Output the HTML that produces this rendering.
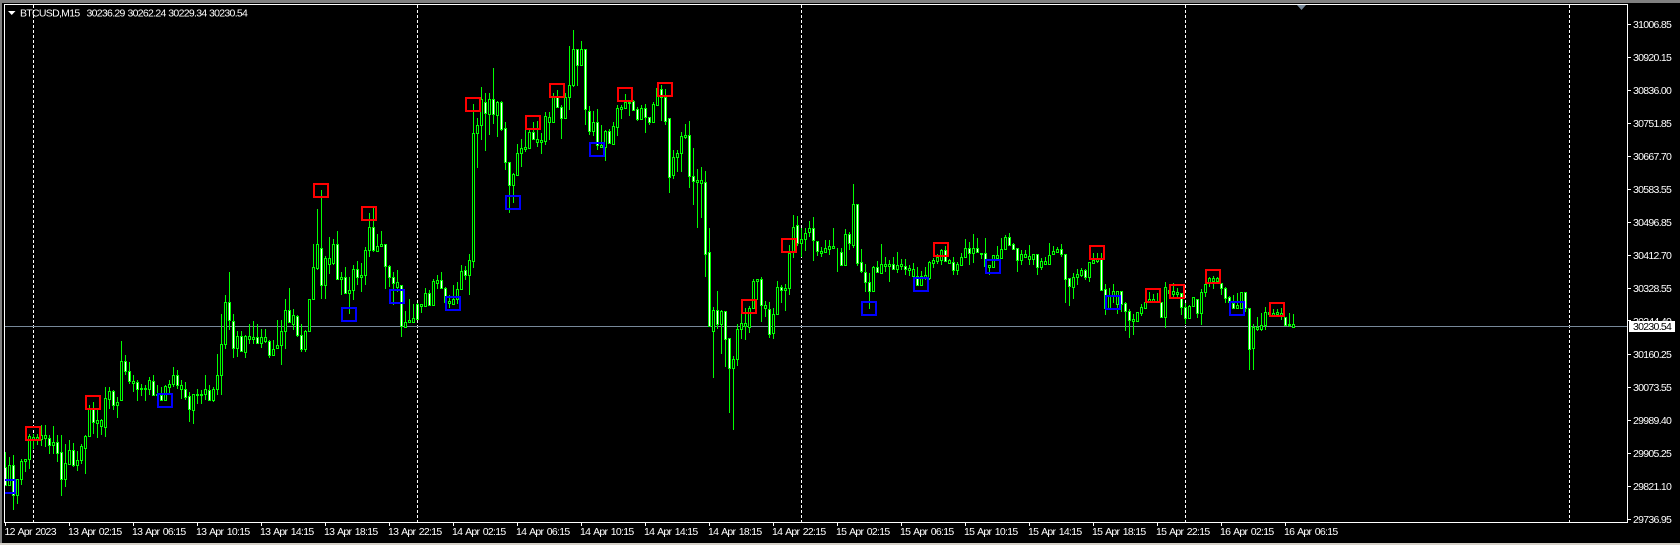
<!DOCTYPE html>
<html lang="en">
<head>
<meta charset="utf-8">
<title>BTCUSD,M15</title>
<style>
html,body{margin:0;padding:0;background:#000;width:1680px;height:545px;overflow:hidden}
svg{display:block}
text{font-family:"Liberation Sans",sans-serif;font-size:10.5px;letter-spacing:-.7px;fill:#fff;dominant-baseline:auto}
.t{word-spacing:1.2px}
</style>
</head>
<body>
<svg width="1680" height="545" viewBox="0 0 1680 545" xmlns="http://www.w3.org/2000/svg">
<rect width="1680" height="545" fill="#000"/>
<rect width="1680" height="3" fill="#808080"/>
<rect width="2" height="545" fill="#808080"/>
<rect y="543" width="1680" height="2" fill="#d4d0c8"/>
<g shape-rendering="crispEdges">
<path d="M33.5 5V522M417.5 5V522M801.5 5V522M1185.5 5V522M1569.5 5V522" stroke="#fff" stroke-width="1" stroke-dasharray="3 2" fill="none"/>
<path d="M5 326.5H1627" stroke="#778899" stroke-width="1"/>
<path fill="none" stroke="#00ff00" stroke-width="1" d="M5.5 452V485M9.5 457V485M13.5 455V510M17.5 479V504M21.5 459V485M25.5 459V472M29.5 434V469M33.5 434V449M37.5 434V445M41.5 425V446M45.5 425V447M49.5 435V454M53.5 426V454M57.5 435V462M61.5 435V496M65.5 444V487M69.5 440V465M73.5 443V467M77.5 451V471M81.5 444V464M85.5 435V474M89.5 405V437M93.5 402V434M97.5 410V438M101.5 419V435M105.5 387V437M109.5 387V409M113.5 390V410M117.5 397V418M121.5 341V400M125.5 355V375M129.5 362V384M133.5 375V392M137.5 380V401M141.5 384V396M145.5 385V401M149.5 377V395M153.5 375V395M157.5 385V404M161.5 387V401M165.5 385V401M169.5 380V395M173.5 367V387M177.5 370V389M181.5 380V399M185.5 382V400M189.5 392V422M193.5 394V424M197.5 389V404M201.5 390V404M205.5 375V400M209.5 385V400M213.5 387V402M217.5 354V395M221.5 314V395M225.5 295V349M229.5 272V330M233.5 314V358M237.5 331V357M241.5 331V352M245.5 335V358M249.5 324V344M253.5 321V344M257.5 324V344M261.5 329V348M265.5 329V343M269.5 340V358M273.5 340V355M277.5 320V348M281.5 320V365M285.5 299V349M289.5 288V322M293.5 309V330M297.5 315V337M301.5 324V352M305.5 330V352M309.5 299V332M313.5 244V300M317.5 209V270M321.5 190V299M325.5 256V299M329.5 237V274M333.5 239V265M337.5 231V279M341.5 272V295M345.5 267V294M349.5 277V314M353.5 265V300M357.5 261V285M361.5 263V292M365.5 247V285M369.5 213V257M373.5 208V252M377.5 234V252M381.5 231V246M385.5 244V289M389.5 265V287M393.5 272V305M397.5 270V292M401.5 285V337M405.5 311V327M409.5 299V322M413.5 304V322M417.5 303V320M421.5 304V313M425.5 288V307M429.5 290V306M433.5 279V306M437.5 275V289M441.5 272V289M445.5 287V305M449.5 295V308M453.5 285V305M457.5 282V304M461.5 265V290M465.5 266V280M469.5 254V295M473.5 104V268M477.5 118V168M481.5 87V140M485.5 93V151M489.5 93V135M493.5 68V124M497.5 101V137M501.5 101V131M505.5 122V170M509.5 162V213M513.5 173V203M517.5 144V175M521.5 139V167M525.5 130V152M529.5 130V148M533.5 122V140M537.5 121V147M541.5 133V154M545.5 112V145M549.5 112V140M553.5 93V122M557.5 90V108M561.5 105V139M565.5 93V119M569.5 46V110M573.5 30V87M577.5 49V86M581.5 41V65M585.5 49V125M589.5 106V135M593.5 111V136M597.5 109V150M601.5 125V147M605.5 130V161M609.5 129V144M613.5 122V144M617.5 105V136M621.5 105V119M625.5 94V108M629.5 102V116M633.5 100V110M637.5 107V121M641.5 105V120M645.5 104V133M649.5 117V125M653.5 102V122M657.5 87V105M661.5 85V121M665.5 89V125M669.5 118V193M673.5 150V179M677.5 150V172M681.5 132V172M685.5 124V139M689.5 121V188M693.5 148V205M697.5 169V228M701.5 167V218M705.5 171V277M709.5 228V325M713.5 307V378M717.5 291V329M721.5 310V354M725.5 311V367M729.5 338V413M733.5 356V430M737.5 324V366M741.5 314V339M745.5 308V340M749.5 306V333M753.5 279V309M757.5 279V300M761.5 277V322M765.5 301V317M769.5 302V338M773.5 308V339M777.5 281V315M781.5 285V303M785.5 284V311M789.5 245V295M793.5 215V258M797.5 216V246M801.5 228V257M805.5 228V251M809.5 221V237M813.5 217V261M817.5 241V256M821.5 247V257M825.5 240V253M829.5 240V255M833.5 228V248M837.5 248V272M841.5 248V266M845.5 229V266M849.5 232V250M853.5 184V248M857.5 204V266M861.5 249V273M865.5 264V292M869.5 273V309M873.5 266V291M877.5 261V273M881.5 244V274M885.5 257V272M889.5 260V282M893.5 257V269M897.5 252V273M901.5 259V270M905.5 259V275M909.5 265V276M913.5 263V286M917.5 267V285M921.5 271V285M925.5 267V280M929.5 261V280M933.5 258V268M937.5 254V264M941.5 249V265M945.5 246V261M949.5 259V263M953.5 257V275M957.5 262V275M961.5 253V265M965.5 239V258M969.5 242V265M973.5 234V263M977.5 238V253M981.5 253V259M985.5 238V266M989.5 265V275M993.5 255V267M997.5 246V258M1001.5 238V258M1005.5 235V250M1009.5 233V246M1013.5 243V249M1017.5 248V272M1021.5 250V265M1025.5 250V258M1029.5 245V265M1033.5 254V265M1037.5 254V275M1041.5 258V270M1045.5 257V264M1049.5 243V264M1053.5 246V255M1057.5 247V253M1061.5 244V257M1065.5 254V303M1069.5 278V306M1073.5 273V299M1077.5 269V285M1081.5 268V277M1085.5 269V280M1089.5 262V282M1093.5 253V263M1097.5 253V263M1101.5 253V290M1105.5 284V315M1109.5 288V309M1113.5 284V303M1117.5 291V314M1121.5 291V312M1125.5 302V331M1129.5 309V338M1133.5 314V335M1137.5 312V322M1141.5 304V316M1145.5 302V308M1149.5 292V302M1153.5 294V302M1157.5 293V303M1161.5 302V317M1165.5 282V328M1169.5 285V295M1173.5 283V298M1177.5 288V298M1181.5 293V315M1185.5 303V324M1189.5 305V318M1193.5 297V307M1197.5 299V318M1201.5 289V325M1205.5 284V297M1209.5 277V287M1213.5 276V289M1217.5 277V283M1221.5 283V295M1225.5 287V303M1229.5 296V312M1233.5 295V308M1237.5 293V308M1241.5 292V308M1245.5 292V312M1249.5 308V370M1253.5 324V370M1257.5 317V331M1261.5 313V331M1265.5 307V330M1269.5 310V316M1273.5 309V315M1277.5 309V315M1281.5 308V320M1285.5 317V325M1289.5 313V327M1293.5 314V328"/>
<path fill="#000" stroke="#00ff00" stroke-width="1" d="M8.5 465.5h2V485.5h-2zM16.5 479.5h2V495.5h-2zM20.5 461.5h2V479.5h-2zM24.5 459.5h2V461.5h-2zM28.5 436.5h2V459.5h-2zM32.5 437.5h2V439.5h-2zM36.5 437.5h2V439.5h-2zM40.5 435.5h2V439.5h-2zM44.5 435.5h2V438.5h-2zM52.5 442.5h2V445.5h-2zM64.5 463.5h2V479.5h-2zM68.5 450.5h2V464.5h-2zM76.5 460.5h2V465.5h-2zM80.5 446.5h2V460.5h-2zM84.5 436.5h2V448.5h-2zM88.5 409.5h2V436.5h-2zM96.5 420.5h2V423.5h-2zM100.5 420.5h2V426.5h-2zM104.5 398.5h2V427.5h-2zM108.5 391.5h2V399.5h-2zM116.5 402.5h2V405.5h-2zM120.5 361.5h2V400.5h-2zM132.5 381.5h2V383.5h-2zM140.5 388.5h2V389.5h-2zM144.5 388.5h2V389.5h-2zM148.5 380.5h2V389.5h-2zM156.5 394.5h2V395.5h-2zM164.5 386.5h2V400.5h-2zM168.5 384.5h2V387.5h-2zM172.5 375.5h2V384.5h-2zM180.5 385.5h2V389.5h-2zM192.5 394.5h2V410.5h-2zM196.5 394.5h2V395.5h-2zM200.5 394.5h2V395.5h-2zM204.5 389.5h2V394.5h-2zM212.5 389.5h2V400.5h-2zM216.5 375.5h2V389.5h-2zM220.5 344.5h2V375.5h-2zM224.5 302.5h2V344.5h-2zM236.5 336.5h2V348.5h-2zM244.5 336.5h2V352.5h-2zM248.5 336.5h2V339.5h-2zM252.5 337.5h2V339.5h-2zM260.5 337.5h2V343.5h-2zM264.5 337.5h2V341.5h-2zM272.5 349.5h2V355.5h-2zM276.5 345.5h2V348.5h-2zM280.5 331.5h2V345.5h-2zM284.5 310.5h2V331.5h-2zM292.5 315.5h2V324.5h-2zM304.5 331.5h2V349.5h-2zM308.5 299.5h2V331.5h-2zM312.5 267.5h2V299.5h-2zM316.5 244.5h2V268.5h-2zM324.5 258.5h2V285.5h-2zM328.5 258.5h2V264.5h-2zM332.5 244.5h2V263.5h-2zM340.5 277.5h2V279.5h-2zM348.5 290.5h2V293.5h-2zM352.5 269.5h2V290.5h-2zM360.5 275.5h2V277.5h-2zM364.5 250.5h2V275.5h-2zM368.5 227.5h2V250.5h-2zM376.5 246.5h2V251.5h-2zM380.5 244.5h2V246.5h-2zM396.5 282.5h2V287.5h-2zM404.5 322.5h2V327.5h-2zM408.5 320.5h2V322.5h-2zM412.5 318.5h2V322.5h-2zM420.5 304.5h2V306.5h-2zM424.5 293.5h2V306.5h-2zM432.5 281.5h2V305.5h-2zM436.5 280.5h2V283.5h-2zM448.5 301.5h2V303.5h-2zM452.5 299.5h2V304.5h-2zM456.5 289.5h2V299.5h-2zM460.5 271.5h2V289.5h-2zM468.5 260.5h2V275.5h-2zM472.5 133.5h2V261.5h-2zM476.5 125.5h2V133.5h-2zM480.5 99.5h2V125.5h-2zM488.5 99.5h2V114.5h-2zM496.5 102.5h2V115.5h-2zM512.5 174.5h2V185.5h-2zM516.5 153.5h2V175.5h-2zM520.5 148.5h2V153.5h-2zM524.5 147.5h2V149.5h-2zM528.5 132.5h2V148.5h-2zM536.5 139.5h2V142.5h-2zM540.5 140.5h2V142.5h-2zM544.5 116.5h2V141.5h-2zM548.5 117.5h2V122.5h-2zM552.5 97.5h2V122.5h-2zM564.5 97.5h2V118.5h-2zM568.5 85.5h2V97.5h-2zM572.5 49.5h2V85.5h-2zM580.5 49.5h2V65.5h-2zM592.5 122.5h2V131.5h-2zM600.5 145.5h2V147.5h-2zM604.5 131.5h2V147.5h-2zM612.5 126.5h2V144.5h-2zM616.5 108.5h2V127.5h-2zM620.5 107.5h2V109.5h-2zM624.5 102.5h2V108.5h-2zM628.5 102.5h2V103.5h-2zM640.5 108.5h2V119.5h-2zM652.5 104.5h2V122.5h-2zM656.5 88.5h2V105.5h-2zM672.5 157.5h2V175.5h-2zM676.5 153.5h2V157.5h-2zM680.5 136.5h2V153.5h-2zM684.5 135.5h2V137.5h-2zM696.5 180.5h2V182.5h-2zM700.5 180.5h2V183.5h-2zM712.5 310.5h2V331.5h-2zM720.5 311.5h2V324.5h-2zM732.5 359.5h2V368.5h-2zM736.5 329.5h2V359.5h-2zM740.5 323.5h2V329.5h-2zM744.5 323.5h2V326.5h-2zM748.5 308.5h2V327.5h-2zM752.5 281.5h2V308.5h-2zM756.5 279.5h2V281.5h-2zM764.5 305.5h2V308.5h-2zM772.5 314.5h2V333.5h-2zM776.5 287.5h2V314.5h-2zM784.5 288.5h2V290.5h-2zM788.5 253.5h2V288.5h-2zM792.5 227.5h2V252.5h-2zM800.5 239.5h2V243.5h-2zM804.5 233.5h2V239.5h-2zM808.5 228.5h2V232.5h-2zM820.5 251.5h2V253.5h-2zM824.5 248.5h2V252.5h-2zM828.5 246.5h2V249.5h-2zM832.5 246.5h2V248.5h-2zM844.5 234.5h2V265.5h-2zM852.5 204.5h2V245.5h-2zM872.5 267.5h2V291.5h-2zM880.5 264.5h2V273.5h-2zM884.5 264.5h2V266.5h-2zM888.5 264.5h2V266.5h-2zM896.5 265.5h2V269.5h-2zM900.5 264.5h2V266.5h-2zM908.5 268.5h2V270.5h-2zM912.5 269.5h2V276.5h-2zM920.5 276.5h2V285.5h-2zM924.5 275.5h2V278.5h-2zM928.5 262.5h2V278.5h-2zM932.5 260.5h2V263.5h-2zM936.5 257.5h2V261.5h-2zM940.5 250.5h2V260.5h-2zM948.5 260.5h2V263.5h-2zM956.5 264.5h2V270.5h-2zM960.5 257.5h2V265.5h-2zM964.5 248.5h2V257.5h-2zM972.5 248.5h2V253.5h-2zM980.5 253.5h2V254.5h-2zM988.5 265.5h2V267.5h-2zM992.5 255.5h2V267.5h-2zM996.5 255.5h2V258.5h-2zM1000.5 249.5h2V258.5h-2zM1004.5 237.5h2V249.5h-2zM1020.5 254.5h2V260.5h-2zM1024.5 254.5h2V257.5h-2zM1028.5 256.5h2V259.5h-2zM1032.5 254.5h2V259.5h-2zM1040.5 261.5h2V267.5h-2zM1044.5 261.5h2V264.5h-2zM1048.5 255.5h2V264.5h-2zM1052.5 251.5h2V254.5h-2zM1056.5 249.5h2V252.5h-2zM1072.5 277.5h2V287.5h-2zM1076.5 274.5h2V277.5h-2zM1080.5 270.5h2V275.5h-2zM1088.5 262.5h2V277.5h-2zM1092.5 260.5h2V263.5h-2zM1096.5 259.5h2V261.5h-2zM1108.5 296.5h2V308.5h-2zM1112.5 291.5h2V296.5h-2zM1116.5 291.5h2V304.5h-2zM1132.5 319.5h2V321.5h-2zM1136.5 312.5h2V321.5h-2zM1140.5 307.5h2V313.5h-2zM1144.5 302.5h2V308.5h-2zM1148.5 299.5h2V302.5h-2zM1152.5 299.5h2V302.5h-2zM1164.5 287.5h2V317.5h-2zM1168.5 290.5h2V293.5h-2zM1172.5 291.5h2V294.5h-2zM1176.5 292.5h2V294.5h-2zM1188.5 306.5h2V318.5h-2zM1192.5 297.5h2V306.5h-2zM1200.5 292.5h2V313.5h-2zM1204.5 284.5h2V292.5h-2zM1208.5 278.5h2V283.5h-2zM1212.5 278.5h2V281.5h-2zM1216.5 278.5h2V281.5h-2zM1236.5 305.5h2V308.5h-2zM1240.5 292.5h2V308.5h-2zM1252.5 327.5h2V348.5h-2zM1256.5 327.5h2V329.5h-2zM1260.5 325.5h2V329.5h-2zM1264.5 312.5h2V325.5h-2zM1268.5 312.5h2V314.5h-2zM1272.5 313.5h2V315.5h-2zM1276.5 312.5h2V314.5h-2zM1280.5 313.5h2V315.5h-2zM1288.5 324.5h2V325.5h-2zM1292.5 324.5h2V327.5h-2z"/>
<path fill="#fff" stroke="#00ff00" stroke-width="1" d="M4.5 467.5h2V485.5h-2zM12.5 465.5h2V495.5h-2zM48.5 438.5h2V445.5h-2zM56.5 442.5h2V453.5h-2zM60.5 452.5h2V479.5h-2zM72.5 450.5h2V465.5h-2zM92.5 409.5h2V422.5h-2zM112.5 391.5h2V405.5h-2zM124.5 361.5h2V371.5h-2zM128.5 371.5h2V381.5h-2zM136.5 382.5h2V389.5h-2zM152.5 381.5h2V395.5h-2zM160.5 395.5h2V400.5h-2zM176.5 375.5h2V385.5h-2zM184.5 389.5h2V397.5h-2zM188.5 396.5h2V409.5h-2zM208.5 390.5h2V400.5h-2zM228.5 302.5h2V320.5h-2zM232.5 321.5h2V348.5h-2zM240.5 336.5h2V351.5h-2zM256.5 337.5h2V343.5h-2zM268.5 341.5h2V355.5h-2zM288.5 310.5h2V322.5h-2zM296.5 316.5h2V335.5h-2zM300.5 335.5h2V349.5h-2zM320.5 248.5h2V285.5h-2zM336.5 244.5h2V279.5h-2zM344.5 277.5h2V293.5h-2zM356.5 269.5h2V277.5h-2zM372.5 227.5h2V250.5h-2zM384.5 244.5h2V266.5h-2zM388.5 266.5h2V277.5h-2zM392.5 277.5h2V283.5h-2zM400.5 285.5h2V326.5h-2zM416.5 304.5h2V319.5h-2zM428.5 293.5h2V305.5h-2zM440.5 280.5h2V288.5h-2zM444.5 288.5h2V302.5h-2zM464.5 270.5h2V275.5h-2zM484.5 102.5h2V113.5h-2zM492.5 99.5h2V114.5h-2zM500.5 102.5h2V129.5h-2zM504.5 128.5h2V162.5h-2zM508.5 162.5h2V185.5h-2zM532.5 132.5h2V139.5h-2zM556.5 97.5h2V107.5h-2zM560.5 107.5h2V118.5h-2zM576.5 49.5h2V65.5h-2zM584.5 49.5h2V109.5h-2zM588.5 111.5h2V131.5h-2zM596.5 122.5h2V145.5h-2zM608.5 131.5h2V143.5h-2zM632.5 101.5h2V110.5h-2zM636.5 109.5h2V119.5h-2zM644.5 108.5h2V117.5h-2zM648.5 117.5h2V122.5h-2zM660.5 89.5h2V97.5h-2zM664.5 97.5h2V121.5h-2zM668.5 118.5h2V177.5h-2zM688.5 135.5h2V176.5h-2zM692.5 176.5h2V181.5h-2zM704.5 182.5h2V254.5h-2zM708.5 252.5h2V326.5h-2zM716.5 310.5h2V324.5h-2zM724.5 311.5h2V339.5h-2zM728.5 338.5h2V368.5h-2zM760.5 279.5h2V305.5h-2zM768.5 309.5h2V334.5h-2zM780.5 287.5h2V290.5h-2zM796.5 225.5h2V243.5h-2zM812.5 228.5h2V240.5h-2zM816.5 241.5h2V251.5h-2zM840.5 252.5h2V265.5h-2zM848.5 234.5h2V243.5h-2zM856.5 204.5h2V263.5h-2zM860.5 262.5h2V271.5h-2zM864.5 272.5h2V282.5h-2zM868.5 282.5h2V291.5h-2zM876.5 267.5h2V272.5h-2zM892.5 264.5h2V269.5h-2zM904.5 266.5h2V269.5h-2zM916.5 276.5h2V285.5h-2zM944.5 250.5h2V261.5h-2zM952.5 262.5h2V270.5h-2zM968.5 248.5h2V253.5h-2zM976.5 248.5h2V252.5h-2zM984.5 253.5h2V266.5h-2zM1008.5 237.5h2V245.5h-2zM1012.5 244.5h2V249.5h-2zM1016.5 248.5h2V260.5h-2zM1036.5 254.5h2V267.5h-2zM1060.5 249.5h2V254.5h-2zM1064.5 254.5h2V279.5h-2zM1068.5 278.5h2V286.5h-2zM1084.5 270.5h2V277.5h-2zM1100.5 259.5h2V290.5h-2zM1104.5 289.5h2V308.5h-2zM1120.5 291.5h2V304.5h-2zM1124.5 303.5h2V311.5h-2zM1128.5 311.5h2V320.5h-2zM1160.5 302.5h2V317.5h-2zM1180.5 293.5h2V307.5h-2zM1184.5 307.5h2V318.5h-2zM1196.5 299.5h2V313.5h-2zM1220.5 283.5h2V288.5h-2zM1224.5 288.5h2V298.5h-2zM1228.5 297.5h2V302.5h-2zM1232.5 303.5h2V308.5h-2zM1244.5 292.5h2V308.5h-2zM1248.5 308.5h2V349.5h-2zM1284.5 317.5h2V325.5h-2z"/>
<g fill="none" stroke="#ff0000" stroke-width="2">
<rect x="26" y="427" width="14" height="13"/>
<rect x="86" y="396" width="14" height="13"/>
<rect x="314" y="184" width="14" height="13"/>
<rect x="362" y="207" width="14" height="13"/>
<rect x="466" y="98" width="14" height="13"/>
<rect x="526" y="116" width="14" height="13"/>
<rect x="550" y="84" width="14" height="13"/>
<rect x="618" y="88" width="14" height="13"/>
<rect x="658" y="83" width="14" height="13"/>
<rect x="782" y="239" width="14" height="13"/>
<rect x="742" y="300" width="14" height="13"/>
<rect x="934" y="243" width="14" height="13"/>
<rect x="1090" y="246" width="14" height="13"/>
<rect x="1146" y="289" width="14" height="13"/>
<rect x="1170" y="285" width="14" height="13"/>
<rect x="1206" y="270" width="14" height="13"/>
<rect x="1270" y="303" width="14" height="13"/>
</g>
<g fill="none" stroke="#0000ff" stroke-width="2">
<path d="M5 480H15V493H5"/>
<rect x="158" y="394" width="14" height="13"/>
<rect x="342" y="308" width="14" height="13"/>
<rect x="390" y="290" width="14" height="13"/>
<rect x="446" y="297" width="14" height="13"/>
<rect x="506" y="196" width="14" height="13"/>
<rect x="590" y="143" width="14" height="13"/>
<rect x="862" y="302" width="14" height="13"/>
<rect x="914" y="278" width="14" height="13"/>
<rect x="986" y="260" width="14" height="13"/>
<rect x="1106" y="296" width="14" height="13"/>
<rect x="1230" y="302" width="14" height="13"/>
</g>
<path d="M4.5 4.5H1627.5V522.5H4.5Z" fill="none" stroke="#fff" stroke-width="1"/>
<path d="M5.5 523V526M69.5 523V526M133.5 523V526M197.5 523V526M261.5 523V526M325.5 523V526M389.5 523V526M453.5 523V526M517.5 523V526M581.5 523V526M645.5 523V526M709.5 523V526M773.5 523V526M837.5 523V526M901.5 523V526M965.5 523V526M1029.5 523V526M1093.5 523V526M1157.5 523V526M1221.5 523V526M1285.5 523V526" stroke="#fff" stroke-width="1"/>
<path d="M1628 24.5H1631M1628 57.5H1631M1628 90.5H1631M1628 123.5H1631M1628 156.5H1631M1628 189.5H1631M1628 222.5H1631M1628 255.5H1631M1628 288.5H1631M1628 354.5H1631M1628 387.5H1631M1628 420.5H1631M1628 453.5H1631M1628 486.5H1631M1628 519.5H1631" stroke="#fff" stroke-width="1"/>
<path d="M8 11H15.5L11.75 15Z" fill="#fff" shape-rendering="auto"/>
<path d="M1297 5H1306L1301.5 10Z" fill="#778899" shape-rendering="auto"/>
</g>
<text x="20" y="16.5">BTCUSD,M15</text>
<text x="86.5" y="16.5">30236.29</text>
<text x="127.5" y="16.5">30262.24</text>
<text x="168.3" y="16.5">30229.34</text>
<text x="209" y="16.5">30230.54</text>
<text x="1633" y="28">31006.85</text>
<text x="1633" y="61">30920.15</text>
<text x="1633" y="94">30836.00</text>
<text x="1633" y="127">30751.85</text>
<text x="1633" y="160">30667.70</text>
<text x="1633" y="193">30583.55</text>
<text x="1633" y="226">30496.85</text>
<text x="1633" y="259">30412.70</text>
<text x="1633" y="292">30328.55</text>
<text x="1633" y="325">30244.40</text>
<text x="1633" y="358">30160.25</text>
<text x="1633" y="391">30073.55</text>
<text x="1633" y="424">29989.40</text>
<text x="1633" y="457">29905.25</text>
<text x="1633" y="490">29821.10</text>
<text x="1633" y="523">29736.95</text>
<rect x="1629" y="321" width="46" height="11" fill="#fff"/>
<path d="M1627 320.5H1631" stroke="#fff" shape-rendering="crispEdges"/>
<text x="1633" y="330" style="fill:#000">30230.54</text>
<g class="t">
<text class="t" x="4.5" y="535">12 Apr 2023</text>
<text class="t" x="68" y="535">13 Apr 02:15</text>
<text class="t" x="132" y="535">13 Apr 06:15</text>
<text class="t" x="196" y="535">13 Apr 10:15</text>
<text class="t" x="260" y="535">13 Apr 14:15</text>
<text class="t" x="324" y="535">13 Apr 18:15</text>
<text class="t" x="388" y="535">13 Apr 22:15</text>
<text class="t" x="452" y="535">14 Apr 02:15</text>
<text class="t" x="516" y="535">14 Apr 06:15</text>
<text class="t" x="580" y="535">14 Apr 10:15</text>
<text class="t" x="644" y="535">14 Apr 14:15</text>
<text class="t" x="708" y="535">14 Apr 18:15</text>
<text class="t" x="772" y="535">14 Apr 22:15</text>
<text class="t" x="836" y="535">15 Apr 02:15</text>
<text class="t" x="900" y="535">15 Apr 06:15</text>
<text class="t" x="964" y="535">15 Apr 10:15</text>
<text class="t" x="1028" y="535">15 Apr 14:15</text>
<text class="t" x="1092" y="535">15 Apr 18:15</text>
<text class="t" x="1156" y="535">15 Apr 22:15</text>
<text class="t" x="1220" y="535">16 Apr 02:15</text>
<text class="t" x="1284" y="535">16 Apr 06:15</text>
</g>
</svg>
</body>
</html>
